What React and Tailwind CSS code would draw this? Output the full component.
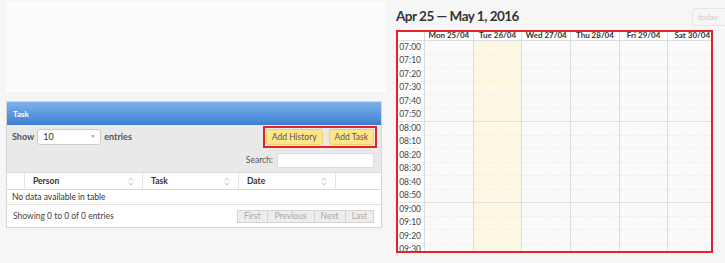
import React from 'react';

const font = { fontFamily: 'Lato, "Open Sans", sans-serif' };

const days = ['Mon 25/04', 'Tue 26/04', 'Wed 27/04', 'Thu 28/04', 'Fri 29/04', 'Sat 30/04', 'Sun 01/05'];
const times = ['07:00', '07:10', '07:20', '07:30', '07:40', '07:50', '08:00', '08:10', '08:20', '08:30', '08:40', '08:50', '09:00', '09:10', '09:20', '09:30', '09:40'];

function SortIcon() {
  return (
    <svg width="6" height="9" viewBox="0 0 6 9" className="shrink-0">
      <path d="M0.8 3.6 L3 1 L5.2 3.6" fill="none" stroke="#c4c4c4" strokeWidth="1" />
      <path d="M0.8 5.4 L3 8 L5.2 5.4" fill="none" stroke="#c4c4c4" strokeWidth="1" />
    </svg>
  );
}

function TaskPanel() {
  return (
    <div className="w-[376px] border border-[#d6d6d6] bg-white">
      <div className="h-[23px] flex items-center px-[6px] bg-gradient-to-b from-[#7eb3ec] to-[#3c7fd1] text-white text-[8px] font-bold">
        Task
      </div>

      <div className="bg-[#e9e9e9] px-[5px] pt-[1px] pb-[4px]">
        <div className="flex items-center justify-between">
          <div className="flex items-center gap-[3px] text-[9px] font-bold text-[#555]">
            <span>Show</span>
            <div className="w-[64px] h-[16px] bg-white border border-[#ccc] rounded-[3px] flex items-center justify-between px-[5px] font-normal text-[#333]">
              <span className="text-[9px]">10</span>
              <span className="text-[5px] text-[#999]">▼</span>
            </div>
            <span>entries</span>
          </div>
          <div className="flex gap-[6px] border-2 border-[#e8202a] p-[1px] mr-[-1px]">
            <button className="h-[16px] px-[5px] bg-[#fde58a] border border-[#eed267] rounded-[3px] text-[8.5px] text-[#555]">Add History</button>
            <button className="h-[16px] px-[5px] bg-[#fde58a] border border-[#eed267] rounded-[3px] text-[8.5px] text-[#555]">Add Task</button>
          </div>
        </div>
        <div className="flex items-center justify-end gap-[4px] mt-[5px] mr-[2px]">
          <span className="text-[8.5px] text-[#555]">Search:</span>
          <div className="w-[97px] h-[15px] bg-white border border-[#ddd] rounded-[2px]" />
        </div>
      </div>

      <div className="grid grid-cols-[17px_118px_96px_97px_1fr] h-[18px] border-y border-[#d9d9d9] text-[8.5px] font-bold text-[#333]">
        <div />
        <div className="flex items-center justify-between px-[8px] border-l border-[#e3e3e3]">
          <span>Person</span><SortIcon />
        </div>
        <div className="flex items-center justify-between px-[8px] border-l border-[#e3e3e3]">
          <span>Task</span><SortIcon />
        </div>
        <div className="flex items-center justify-between px-[8px] border-l border-[#e3e3e3]">
          <span>Date</span><SortIcon />
        </div>
        <div className="border-l border-[#e3e3e3]" />
      </div>

      <div className="h-[15px] flex items-center px-[5px] text-[8.5px] text-[#333] border-b border-[#e3e3e3]">
        No data available in table
      </div>

      <div className="h-[22px] flex items-center justify-between pl-[6px] pr-[7px] text-[8.5px] text-[#444]">
        <span>Showing 0 to 0 of 0 entries</span>
        <div className="flex h-[13px] border border-[#d4d4d4] bg-[#ededed] text-[8.5px] text-[#aaa]">
          <span className="px-[6px] flex items-center border-r border-[#d4d4d4]">First</span>
          <span className="px-[7px] flex items-center border-r border-[#d4d4d4]">Previous</span>
          <span className="px-[6px] flex items-center border-r border-[#d4d4d4]">Next</span>
          <span className="px-[6px] flex items-center">Last</span>
        </div>
      </div>
    </div>
  );
}

function Calendar() {
  return (
    <div className="w-[335px] shrink-0 pl-[6px] pt-[8px]">
      <div className="flex items-center justify-between h-[17px]">
        <h2 className="text-[13.5px] font-bold text-[#333] tracking-[-0.5px]">Apr 25 — May 1, 2016</h2>
        <div className="w-[40px] h-[18px] mr-[-7px] border border-[#e5e5e5] rounded-[3px] text-[8px] text-[#ccc] flex items-center pl-[5px]">today</div>
      </div>
      <div className="mt-[5px] w-[317px] h-[223px] border-2 border-[#e8202a] overflow-hidden bg-[#fafafa]">
        <div className="flex w-[400px] h-[9px] border-b border-[#dcdcdc] bg-white">
          <div className="w-[27px] shrink-0 border-r border-[#dcdcdc]" />
          {days.map((d) => (
            <div key={d} className="w-[48.7px] shrink-0 border-r border-[#dcdcdc] flex items-start justify-center">
              <span className="relative -top-[1px] text-[8px] leading-[8px] font-bold text-[#333] whitespace-nowrap">{d}</span>
            </div>
          ))}
        </div>
        <div className="flex w-[400px]">
          <div className="w-[27px] shrink-0 border-r border-[#dcdcdc] bg-white">
            {times.map((t, i) => (
              <div key={t} className={`h-[13.5px] flex items-center justify-end pr-[3px] text-[8.5px] text-[#444] ${i % 6 === 5 ? 'border-b border-[#e2e2e2]' : 'border-b border-dashed border-[#efefef]'}`}>
                {t}
              </div>
            ))}
          </div>
          {days.map((d, di) => (
            <div key={d} className={`w-[48.7px] shrink-0 border-r border-[#dcdcdc] ${di === 1 ? 'bg-[#fcf8e3]' : ''}`}>
              {times.map((t, i) => (
                <div key={t} className={`h-[13.5px] ${i % 6 === 5 ? 'border-b border-[#e2e2e2]' : 'border-b border-dashed border-[#efefef]'}`} />
              ))}
            </div>
          ))}
        </div>
      </div>
    </div>
  );
}

export default function App() {
  return (
    <div className="w-[725px] h-[263px] bg-[#f6f6f6] flex overflow-hidden" style={font}>
      <div className="w-[390px] shrink-0 pl-[6px] pt-[2px]">
        <div className="w-[380px] h-[90px] bg-[#fcfcfc]" />
        <div className="mt-[9px]">
          <TaskPanel />
        </div>
      </div>
      <Calendar />
    </div>
  );
}
